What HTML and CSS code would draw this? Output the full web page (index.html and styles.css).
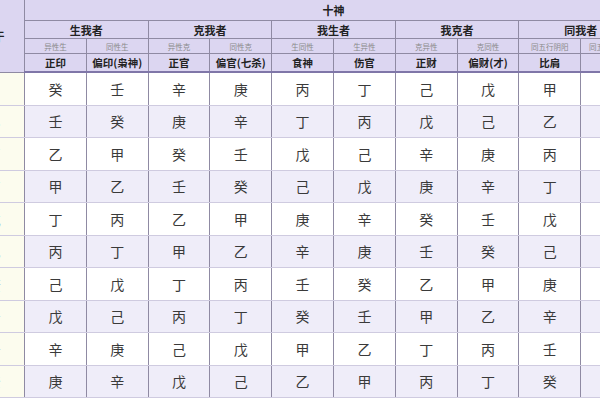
FILE: index.html
```html
<!DOCTYPE html>
<html lang="zh">
<head>
<meta charset="utf-8">
<link rel="stylesheet" href="styles.css">
</head>
<body>
<div class="wrap">
<table class="ss">
<colgroup>
<col class="c-stem">
<col class="c"><col class="c"><col class="c"><col class="c"><col class="c">
<col class="c"><col class="c"><col class="c"><col class="c"><col class="c">
</colgroup>
<thead>
<tr class="h1"><th rowspan="4" class="stem-h">日干</th><th colspan="10">十神</th></tr>
<tr class="h2"><th colspan="2">生我者</th><th colspan="2">克我者</th><th colspan="2">我生者</th><th colspan="2">我克者</th><th colspan="2">同我者</th></tr>
<tr class="h3"><th>异性生</th><th>同性生</th><th>异性克</th><th>同性克</th><th>生同性</th><th>生异性</th><th>克异性</th><th>克同性</th><th>同五行阴阳</th><th>同五行异阴阳</th></tr>
<tr class="h4"><th>正印</th><th>偏印(枭神)</th><th>正官</th><th>偏官(七杀)</th><th>食神</th><th>伤官</th><th>正财</th><th>偏财(才)</th><th>比肩</th><th>劫财</th></tr>
</thead>
<tbody>
<tr><th>甲</th><td>癸</td><td>壬</td><td>辛</td><td>庚</td><td>丙</td><td>丁</td><td>己</td><td>戊</td><td>甲</td><td>乙</td></tr>
<tr><th>乙</th><td>壬</td><td>癸</td><td>庚</td><td>辛</td><td>丁</td><td>丙</td><td>戊</td><td>己</td><td>乙</td><td>甲</td></tr>
<tr><th>丙</th><td>乙</td><td>甲</td><td>癸</td><td>壬</td><td>戊</td><td>己</td><td>辛</td><td>庚</td><td>丙</td><td>丁</td></tr>
<tr><th>丁</th><td>甲</td><td>乙</td><td>壬</td><td>癸</td><td>己</td><td>戊</td><td>庚</td><td>辛</td><td>丁</td><td>丙</td></tr>
<tr><th>戊</th><td>丁</td><td>丙</td><td>乙</td><td>甲</td><td>庚</td><td>辛</td><td>癸</td><td>壬</td><td>戊</td><td>己</td></tr>
<tr><th>己</th><td>丙</td><td>丁</td><td>甲</td><td>乙</td><td>辛</td><td>庚</td><td>壬</td><td>癸</td><td>己</td><td>戊</td></tr>
<tr><th>庚</th><td>己</td><td>戊</td><td>丁</td><td>丙</td><td>壬</td><td>癸</td><td>乙</td><td>甲</td><td>庚</td><td>辛</td></tr>
<tr><th>辛</th><td>戊</td><td>己</td><td>丙</td><td>丁</td><td>癸</td><td>壬</td><td>甲</td><td>乙</td><td>辛</td><td>庚</td></tr>
<tr><th>壬</th><td>辛</td><td>庚</td><td>己</td><td>戊</td><td>甲</td><td>乙</td><td>丁</td><td>丙</td><td>壬</td><td>癸</td></tr>
<tr><th>癸</th><td>庚</td><td>辛</td><td>戊</td><td>己</td><td>乙</td><td>甲</td><td>丙</td><td>丁</td><td>癸</td><td>壬</td></tr>
</tbody>
</table>
</div>
</body>
</html>
```
FILE: styles.css
```css
html, body {
  margin: 0;
  padding: 0;
  background: #ffffff;
  overflow: hidden;
}
body {
  font-family: "Noto Sans CJK SC", "Noto Sans", sans-serif;
  color: #333;
}
.wrap {
  margin-left: -38px;
  margin-top: -1px;
}
.ss {
  border-collapse: collapse;
  table-layout: fixed;
  width: 680px;
}
.c-stem { width: 62px; }
.c { width: 61.8px; }
.ss th, .ss td {
  border-left: 1px solid #8f8aa3;
  border-right: 1px solid #8f8aa3;
  padding: 0;
  text-align: center;
  overflow: hidden;
  white-space: nowrap;
}
thead th {
  background: #dcd6f1;
  color: #222;
  font-weight: 700;
  border-top: 1px solid #8f8aa3;
  border-bottom: 1px solid #8f8aa3;
}
.h1 th { height: 20px; font-size: 11px; }
.h2 th { height: 17px; font-size: 11px; }
.h3 th { height: 14px; font-size: 7.5px; font-weight: 400; color: #8a8a8a; }
.h4 th { height: 17px; font-size: 10.5px; border-bottom: 2px solid #7f76a8; }
.stem-h { font-size: 12px; }
tbody td, tbody th {
  height: 31.5px;
  font-size: 14px;
  font-weight: 400;
  color: #3a3a3a;
  border-bottom: 1px solid #cfcbe0;
}
tbody tr:nth-child(odd) td { background: #ffffff; }
tbody tr:nth-child(even) td { background: #efedf9; }
tbody th { background: #fcfcee; }
```
